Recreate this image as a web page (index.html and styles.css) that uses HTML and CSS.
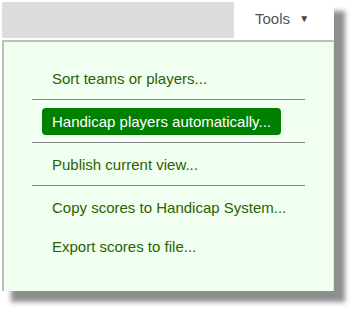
FILE: index.html
```html
<!DOCTYPE html>
<html lang="en">
<head>
  <meta charset="UTF-8">
  <title>Tools menu</title>
  <link rel="stylesheet" href="styles.css">
</head>
<body>
  <div class="frame">
    <div class="topbar">
      <div class="tab">Tools <span class="caret">&#9660;</span></div>
    </div>
    <ul class="menu">
      <li class="item">Sort teams or players...</li>
      <li class="sep"></li>
      <li class="item active">Handicap players automatically...</li>
      <li class="sep"></li>
      <li class="item">Publish current view...</li>
      <li class="sep"></li>
      <li class="item">Copy scores to Handicap System...</li>
      <li class="item">Export scores to file...</li>
    </ul>
  </div>
</body>
</html>
```

FILE: styles.css
```css
html {
  height: 100%;
  background: #fff;
}
body {
  margin: 0;
  padding: 2px 20px 18px 2px;
  min-height: 100%;
  box-sizing: border-box;
  background: #fff;
  font-family: "Liberation Sans", Arial, sans-serif;
  font-size: 15px;
}
.frame {
  width: 332px;
  background: #fff;
  box-shadow: 10px 10px 5px 1px #8e8e8e;
}
.topbar {
  display: flex;
  justify-content: flex-end;
  height: 36px;
  background: #dcdcdc;
}
.tab {
  width: 100px;
  background: #fff;
  color: #555;
  line-height: 34px;
  padding-left: 21px;
  box-sizing: border-box;
}
.caret {
  font-size: 10px;
  color: #444;
  margin-left: 5px;
  vertical-align: 2px;
}
.menu {
  list-style: none;
  margin: 2px 0 0 0;
  padding: 17px 28px 25px 28px;
  height: 251px;
  box-sizing: border-box;
  background: #f0fff0;
  border-top: 2px solid #bdbdbd;
  border-left: 2px solid #bdbdbd;
  border-right: 1px solid #e4e4e4;
  display: flex;
  flex-direction: column;
  align-items: flex-start;
}
.item {
  line-height: 17px;
  padding: 5px 10px;
  margin: 6px 0 6px 10px;
  color: #2c6200;
  border-radius: 4px;
}
.item.active {
  background: #008000;
  color: #fff;
}
.sep {
  align-self: stretch;
  height: 1px;
  background: #888;
  margin: 1px 0 2px 0;
}
```
